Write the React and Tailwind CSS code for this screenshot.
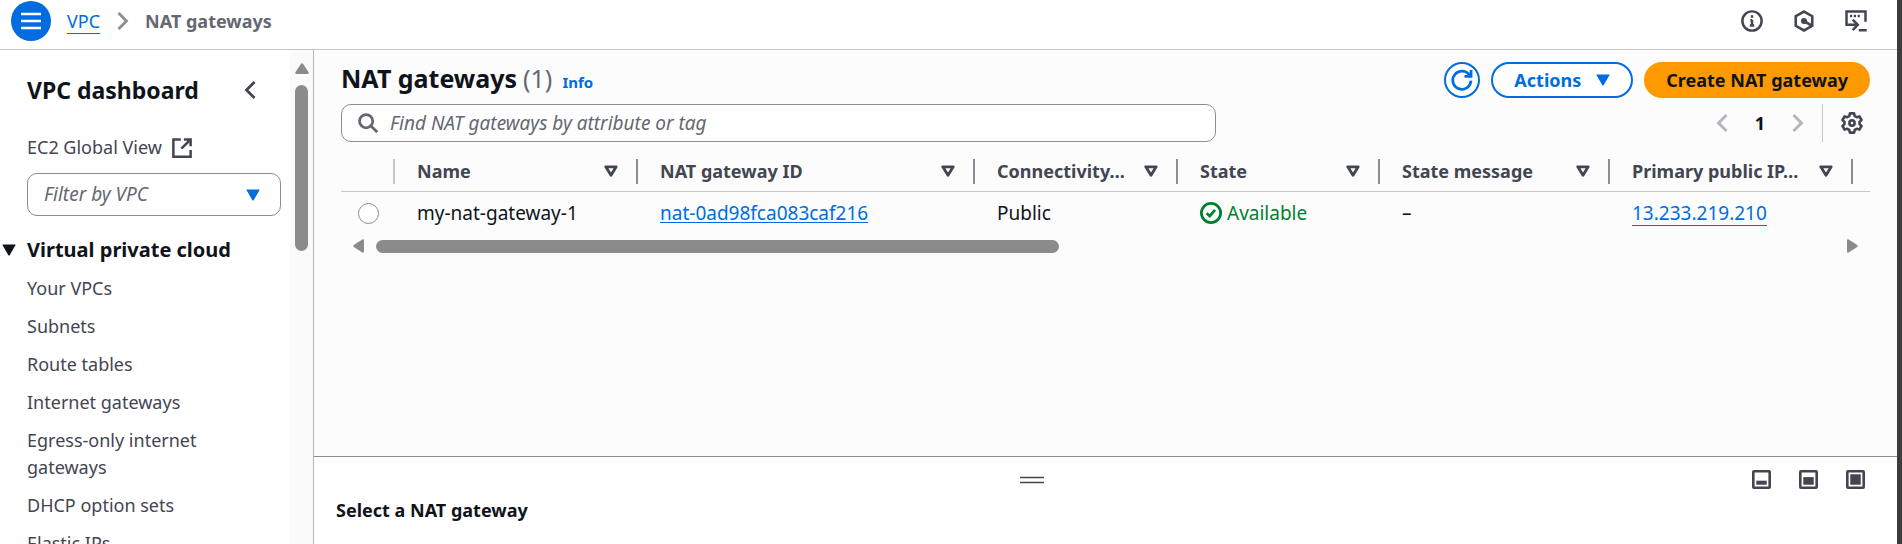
const NAV = [
  "Your VPCs",
  "Subnets",
  "Route tables",
  "Internet gateways",
  "Egress-only internet gateways",
  "DHCP option sets",
  "Elastic IPs",
];

const COLUMNS = [
  { label: "Name", width: "w-[243px]" },
  { label: "NAT gateway ID", width: "w-[337px]" },
  { label: "Connectivity…", width: "w-[203px]" },
  { label: "State", width: "w-[202px]" },
  { label: "State message", width: "w-[230px]" },
  { label: "Primary public IP…", width: "w-[243px]" },
];

function Icon({ className = "size-5", strokeWidth = 2, children }) {
  return (
    <svg
      viewBox="0 0 16 16"
      className={`shrink-0 ${className}`}
      fill="none"
      stroke="currentColor"
      strokeWidth={strokeWidth}
      aria-hidden="true"
    >
      {children}
    </svg>
  );
}

function Triangle({ className = "" }) {
  return (
    <svg viewBox="0 0 14 12" className={`h-3 w-3.5 shrink-0 ${className}`} fill="currentColor" aria-hidden="true">
      <path d="M1 .5h12q.8 0 .4.8L7.8 11q-.8 1-1.6 0L.6 1.3Q.2.5 1 .5z" />
    </svg>
  );
}

function Chevron({ left, className = "" }) {
  return (
    <svg
      viewBox="0 0 12 20"
      className={`h-5 w-3 shrink-0 ${className}`}
      fill="none"
      stroke="currentColor"
      strokeWidth="2.8"
      aria-hidden="true"
    >
      <path d={left ? "M10.5 2 2.5 10l8 8" : "M1.5 2l8 8-8 8"} />
    </svg>
  );
}

function TopBar() {
  return (
    <header className="flex h-[50px] shrink-0 items-center border-b border-[#c6c6cd] bg-white pb-2 pl-[11px] pr-[30px] pt-px">
      <button
        type="button"
        aria-label="Open navigation"
        className="flex size-10 items-center justify-center rounded-full bg-[#006ce0] text-white"
      >
        <svg viewBox="0 0 20 18" className="h-[18px] w-5" stroke="currentColor" strokeWidth="2.5" aria-hidden="true">
          <path d="M0 2h20M0 9h20M0 16h20" />
        </svg>
      </button>
      <nav aria-label="Breadcrumb" className="ml-4 flex items-center">
        <a href="#vpc" className="border-b border-[#006ce0] leading-6 text-[#006ce0]">
          VPC
        </a>
        <Chevron className="ml-[17px] text-[#8c8c94]" />
        <span className="ml-4 font-bold text-[#656871]">NAT gateways</span>
      </nav>
      <div className="ml-auto flex items-center gap-[30px] text-[#424650]">
        <button type="button" aria-label="Info">
          <Icon className="size-[22px]" strokeWidth={1.8}>
            <circle cx="8" cy="8" r="7" />
            <path d="M8 11.800V7M8 5.600V3.900M6.800 7.500H8M6.400 11.300h3.200" />
          </Icon>
        </button>
        <button type="button" aria-label="Amazon Q">
          <Icon className="size-[22px]" strokeWidth={1.9}>
            <path d="M8 1.1 14 4.5v7L8 14.9 2 11.5v-7z" />
            <circle cx="8" cy="8" r="2.2" fill="currentColor" stroke="none" />
            <path d="M8 8l5.6 3.3" />
          </Icon>
        </button>
        <button type="button" aria-label="CloudShell">
          <Icon className="size-[22px]" strokeWidth={1.8}>
            <path d="M4.500 10.800H1.100V1.100h13.800v7.400M10 14.800H15.800" />
            <path d="M3.600 4.300h1.600M6.400 4.300h1.600M9.200 4.300h1.600" />
            <path d="M4 10.800H9M5.600 7l3.700 3.800-3.700 3.800" />
          </Icon>
        </button>
      </div>
    </header>
  );
}

function Sidebar() {
  return (
    <aside className="flex w-[314px] shrink-0 border-r border-[#b4b4bb] bg-white">
      <div className="min-w-0 flex-1 overflow-hidden pl-[27px] pr-[9px]">
        <div className="flex items-center justify-between pr-[25px] pt-6">
          <h2 className="text-[23px] font-bold leading-8 text-[#0f141a]">VPC dashboard</h2>
          <button type="button" aria-label="Close navigation" className="text-[#424650]">
            <Chevron left />
          </button>
        </div>
        <a href="#global" className="mt-7 flex items-center gap-[10px] leading-[27px] text-[#424650]">
          EC2 Global View
          <Icon className="size-5" strokeWidth={2}>
            <path d="M7 1.1H1.1v13.8h13.8V9.5M9.5 1.1h5.4v5.4M14.6 1.4 7.5 8.5" />
          </Icon>
        </a>
        <button
          type="button"
          className="mt-3 flex h-[43px] w-full items-center justify-between rounded-[10px] border border-[#8c8c94] bg-white pl-4 pr-5 text-[19px] italic text-[#656871]"
        >
          Filter by VPC
          <Triangle className="text-[#006ce0]" />
        </button>
        <button
          type="button"
          aria-expanded="true"
          className="-ml-[25px] mt-[18px] flex items-center gap-[11px] text-[20px] font-bold leading-8 text-[#0f141a]"
        >
          <Triangle />
          Virtual private cloud
        </button>
        <ul className="mt-[9px] flex flex-col gap-[11px] pr-10">
          {NAV.map((item) => (
            <li key={item} className="leading-[27px]">
              <a href="#nav" className="text-[#424650]">
                {item}
              </a>
            </li>
          ))}
        </ul>
      </div>
      <div className="flex w-[23px] shrink-0 flex-col items-center bg-[#fafafa] pt-[13px]" aria-hidden="true">
        <svg viewBox="0 0 14 11" className="h-[11px] w-3.5" fill="#8b8b8b">
          <path d="M6 .8q1-1 2 0l5.6 8.5q.5 1.7-1 1.7H1.400q-1.500 0-1-1.700z" />
        </svg>
        <div className="mt-[11px] h-[166px] w-[13px] rounded-full bg-[#8b8b8b]" />
      </div>
    </aside>
  );
}

function GatewayTable() {
  return (
    <table className="mt-[10px] w-full table-fixed border-collapse text-left">
      <colgroup>
        <col className="w-[54px]" />
        {COLUMNS.map((c) => (
          <col key={c.label} className={c.width} />
        ))}
        <col />
      </colgroup>
      <thead className="text-[#424650]">
        <tr className="h-[39px] border-b border-[#c6c6cd]">
          <th className="p-0">
            <div className="h-[25px] border-r-2 border-[#c6c6cd]" />
          </th>
          {COLUMNS.map((c) => (
            <th key={c.label} className="p-0 font-bold">
              <div className="flex h-[25px] items-center justify-between border-r-2 border-[#8c8c94] pl-[22px] pr-[18px]">
                <span className="whitespace-nowrap">{c.label}</span>
                <button type="button" aria-label={`Sort by ${c.label}`}>
                  <svg viewBox="0 0 14 12" className="h-3 w-3.5" fill="none" stroke="currentColor" strokeWidth="2.8" strokeLinejoin="round" aria-hidden="true">
                    <path d="M1.800 1.800h10.400L7 10.200z" />
                  </svg>
                </button>
              </div>
            </th>
          ))}
          <th className="p-0" />
        </tr>
      </thead>
      <tbody className="text-[19px] text-[#0f141a]">
        <tr className="h-11">
          <td className="p-0 pl-[17px]">
            <input
              type="radio"
              name="gateway"
              aria-label="Select my-nat-gateway-1"
              className="block size-[21px] appearance-none rounded-full border border-[#8c8c94] bg-white"
            />
          </td>
          <td className="p-0 pl-[22px]">my-nat-gateway-1</td>
          <td className="p-0 pl-[22px]">
            <a href="#gateway" className="text-[#006ce0] underline underline-offset-2">
              nat-0ad98fca083caf216
            </a>
          </td>
          <td className="p-0 pl-[22px]">Public</td>
          <td className="p-0 pl-[22px]">
            <span className="flex items-center gap-[5px] text-[#00802f]">
              <Icon className="size-[22px]" strokeWidth={2}>
                <circle cx="8" cy="8" r="7" />
                <path d="M4.800 8.200l2.300 2 3.800-4.500" />
              </Icon>
              Available
            </span>
          </td>
          <td className="p-0 pl-[22px]">–</td>
          <td className="p-0 pl-[22px]">
            <a href="#ip" className="inline-block border-b border-[#006ce0] leading-6 text-[#006ce0]">
              13.233.219.210
            </a>
          </td>
          <td className="p-0" />
        </tr>
      </tbody>
    </table>
  );
}

function Main() {
  return (
    <main className="flex-1 bg-[#fcfcfd] pl-[27px] pr-[27px] pt-3">
      <div className="flex h-9 items-center justify-between">
        <h1 className="flex items-baseline text-[25px] font-bold leading-9 text-[#0f141a]">
          NAT gateways
          <span className="ml-[6px] font-normal text-[#656871]">(1)</span>
          <a href="#info" className="ml-[10px] text-[15px] text-[#006ce0]">
            Info
          </a>
        </h1>
        <div className="flex items-center gap-[11px] font-bold">
          <button
            type="button"
            aria-label="Refresh"
            className="flex size-9 items-center justify-center rounded-full border-2 border-[#006ce0] bg-white text-[#006ce0]"
          >
            <Icon className="size-[22px]" strokeWidth={2}>
              <path d="M14.500 8.500A6.600 6.600 0 1 1 13.600 4.800M14.600.8v4.600H9.800" />
            </Icon>
          </button>
          <button
            type="button"
            className="flex h-9 items-center gap-[15px] rounded-full border-2 border-[#006ce0] bg-white px-[21px] text-[#006ce0]"
          >
            Actions
            <Triangle />
          </button>
          <button type="button" className="h-9 rounded-full bg-[#ff9900] px-[22px] text-[#0f141a]">
            Create NAT gateway
          </button>
        </div>
      </div>
      <div className="mt-[6px] flex h-[38px] items-center justify-between">
        <label className="flex h-full w-[875px] items-center rounded-[10px] border border-[#8c8c94] bg-white pl-4 pr-4 text-[#656871]">
          <Icon className="size-5" strokeWidth={2.2}>
            <circle cx="6.500" cy="6.500" r="5.300" />
            <path d="M10.400 10.400l4.900 4.900" />
          </Icon>
          <input
            type="search"
            aria-label="Find NAT gateways"
            placeholder="Find NAT gateways by attribute or tag"
            className="ml-3 min-w-0 flex-1 bg-transparent text-[19px] italic outline-none placeholder:text-[#656871]"
          />
        </label>
        <div className="flex h-full items-center pr-[7px]">
          <button type="button" aria-label="Previous page" className="text-[#b4b4bb]">
            <Chevron left />
          </button>
          <button type="button" aria-current="page" className="w-16 text-center font-bold text-[#0f141a]">
            1
          </button>
          <button type="button" aria-label="Next page" className="text-[#b4b4bb]">
            <Chevron />
          </button>
          <span className="ml-[18px] h-full border-l border-[#c6c6cd]" />
          <button type="button" aria-label="Preferences" className="ml-[18px] text-[#424650]">
            <Icon className="size-[22px]" strokeWidth={1.900}>
              <path
                strokeLinejoin="round"
                d="M6.500 1h3l.5 2 1.400.800 2-.6 1.500 2.600L13.500 7.200v1.600l1.400 1.400-1.500 2.600-2-.6-1.400.800-.5 2h-3l-.5-2-1.400-.800-2 .6-1.500-2.600L2.500 8.800V7.200L1.100 5.800l1.500-2.600 2 .6L6 3z"
              />
              <circle cx="8" cy="8" r="1.900" />
            </Icon>
          </button>
        </div>
      </div>
      <GatewayTable />
      <div className="mt-1 flex h-3.5 items-center pl-3 pr-3" aria-hidden="true">
        <svg viewBox="0 0 11 14" className="h-3.5 w-[11px]" fill="#8b8b8b">
          <path d="M.8 6q-1 1 0 2l8.500 5.600q1.700.5 1.700-1V1.400Q11-.1 9.300.4z" />
        </svg>
        <div className="mx-3 flex-1">
          <div className="h-[13px] w-[683px] rounded-full bg-[#8b8b8b]" />
        </div>
        <svg viewBox="0 0 11 14" className="h-3.5 w-[11px]" fill="#8b8b8b">
          <path d="M10.200 6q1 1 0 2l-8.500 5.600q-1.700.5-1.700-1V1.400Q0-.1 1.700.4z" />
        </svg>
      </div>
    </main>
  );
}

function SplitPanel() {
  const sizes = [
    { label: "Small panel", y: 9, h: 3.4 },
    { label: "Medium panel", y: 6, h: 6.4 },
    { label: "Full panel", y: 3.6, h: 8.8 },
  ];
  return (
    <section className="h-[88px] shrink-0 border-t border-[#8c8c94] bg-white pl-[22px] pr-8 pt-[13px]">
      <div className="grid grid-cols-[5fr_24px_6fr] items-center">
        <button type="button" aria-label="Resize panel" className="col-start-2 text-[#424650]">
          <svg viewBox="0 0 24 8" className="h-2 w-6" stroke="currentColor" strokeWidth="1.500" aria-hidden="true">
            <path d="M0 1.500h24M0 6.500h24" />
          </svg>
        </button>
        <div className="flex justify-end gap-7 text-[#424650]">
          {sizes.map((s) => (
            <button key={s.label} type="button" aria-label={s.label}>
              <Icon className="size-[19px]" strokeWidth={2.2}>
                <rect x="1.100" y="1.100" width="13.800" height="13.800" rx=".5" />
                <rect x="3.600" y={s.y} width="8.800" height={s.h} fill="currentColor" stroke="none" />
              </Icon>
            </button>
          ))}
        </div>
      </div>
      <h2 className="mt-2 font-bold leading-[27px] text-[#0f141a]">Select a NAT gateway</h2>
    </section>
  );
}

export default function App() {
  return (
    <div className="flex h-screen overflow-hidden border-r-[5px] border-[#3a3c3d] bg-white font-['Noto_Sans',sans-serif] text-[18px]">
      <div className="flex min-w-0 flex-1 flex-col">
        <TopBar />
        <div className="flex min-h-0 flex-1">
          <Sidebar />
          <div className="flex min-w-0 flex-1 flex-col">
            <Main />
            <SplitPanel />
          </div>
        </div>
      </div>
    </div>
  );
}
